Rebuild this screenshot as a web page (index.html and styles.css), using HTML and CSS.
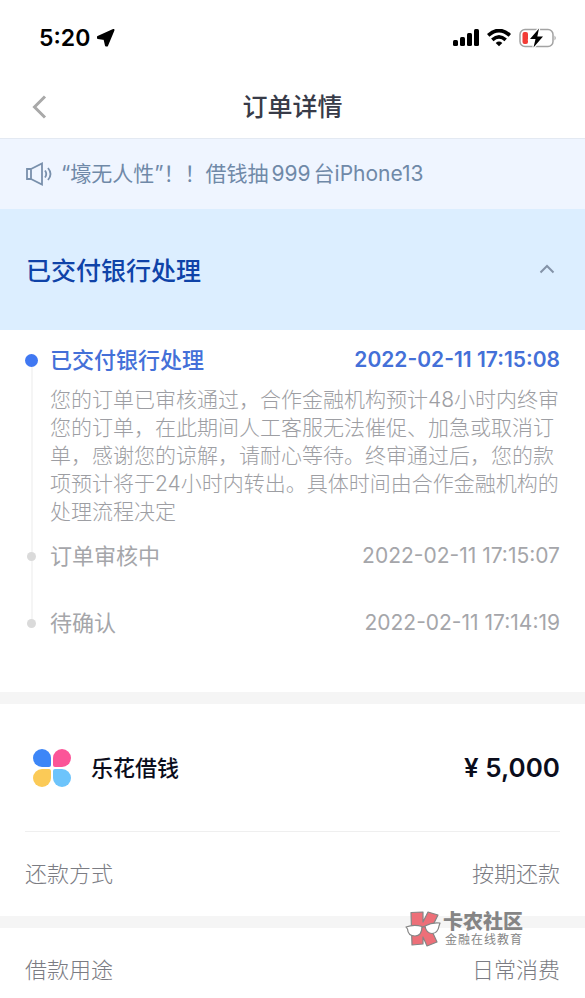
FILE: index.html
```html
<!DOCTYPE html>
<html lang="zh-CN">
<head>
    <meta charset="UTF-8">
    <meta name="viewport" content="width=device-width, initial-scale=1.0">
    <title>订单详情</title>
    <link rel="stylesheet" href="styles.css">
</head>
<body>
    <!-- Status bar -->
    <div class="status-bar">
        <div class="status-time">
            <span>5:20</span>
            <svg width="20" height="20" viewBox="0 0 20 20"><path d="M17.500 2 L2 9 L2 10 L8.500 11 L10 17.500 L11 17.500 Z" fill="#000" stroke="#000" stroke-width="2" stroke-linejoin="round"/></svg>
        </div>
        <div class="status-icons">
            <svg width="26" height="18" viewBox="0 0 26 18">
                <rect x="0" y="11" width="5" height="6" rx="1.500"/>
                <rect x="7" y="8" width="5" height="9" rx="1.500"/>
                <rect x="14" y="4" width="5" height="13" rx="1.500"/>
                <rect x="21" y="0" width="5" height="17" rx="1.500"/>
            </svg>
            <svg width="24" height="18" viewBox="0 0 24 18" fill="none" stroke="#000" stroke-width="3.600">
                <path d="M1.200 6.300 Q12 -3.300 22.800 6.300"/>
                <path d="M5.300 10.800 Q12 4.800 18.700 10.800"/>
                <path d="M12 17.300 L8.700 13.900 Q12 11.300 15.300 13.900 Z" fill="#000" stroke="none"/>
            </svg>
            <svg width="38" height="20" viewBox="0 0 38 20">
                <rect x="1" y="1.500" width="33" height="17" rx="5" fill="#fff" stroke="#a3a3a3" stroke-width="1.500"/>
                <path d="M35.500 7.500 Q38 10 35.500 12.500 Z" fill="#a3a3a3"/>
                <rect x="3.500" y="4" width="5.500" height="12" rx="2" fill="#f23c36"/>
                <path d="M20 0.500 L11 11 L16.500 11 L14.500 19.500 L24 8.500 L18.300 8.500 Z" fill="#000" stroke="#fff" stroke-width="2.500" paint-order="stroke"/>
            </svg>
        </div>
    </div>

    <header class="nav">
        <button class="back" type="button" aria-label="返回">
            <svg width="15" height="24" viewBox="0 0 15 24" fill="none" stroke="#a9a9a9" stroke-width="3"><path d="M13 1.500 L2.500 12 L13 22.500"/></svg>
        </button>
        <h1>订单详情</h1>
    </header>

    <a class="notice" href="#">
        <svg width="28" height="24" viewBox="0 0 28 24" fill="none" stroke="#7990ac" stroke-width="1.800">
            <path d="M2 7 H6 V17 H2 Z M6 7 L17 1.500 V22.500 L6 17"/>
            <path d="M20 8.500 Q22.500 12 20 15.500 M23 6 Q28 12 23 18"/>
        </svg>
        <span>“壕无人性”！！借钱抽<span class="num">999</span>台iPhone13</span>
    </a>

    <!-- Order progress -->
    <button class="banner" type="button" aria-expanded="true">
        <span>已交付银行处理</span>
        <svg width="16" height="10" viewBox="0 0 16 10" fill="none" stroke="#8493a8" stroke-width="2"><path d="M1.500 8.500 L8 2 L14.500 8.500"/></svg>
    </button>

    <ol class="timeline">
        <li class="step active">
            <div class="marker"></div>
            <div class="step-body">
                <div class="step-head">
                    <h2>已交付银行处理</h2>
                    <time>2022-02-11 17:15:08</time>
                </div>
                <p>您的订单已审核通过，合作金融机构预计48小时内终审您的订单，在此期间人工客服无法催促、加急或取消订单，感谢您的谅解，请耐心等待。终审通过后，您的款项预计将于24小时内转出。具体时间由合作金融机构的处理流程决定</p>
            </div>
        </li>
        <li class="step">
            <div class="marker"></div>
            <div class="step-body">
                <div class="step-head">
                    <h2>订单审核中</h2>
                    <time>2022-02-11 17:15:07</time>
                </div>
            </div>
        </li>
        <li class="step">
            <div class="marker"></div>
            <div class="step-body">
                <div class="step-head">
                    <h2>待确认</h2>
                    <time>2022-02-11 17:14:19</time>
                </div>
            </div>
        </li>
    </ol>

    <!-- Loan info -->
    <section class="card">
        <div class="product">
            <svg width="38" height="38" viewBox="0 0 38 38">
                <path d="M9 0 A9 9 0 0 0 9 18 H16 Q18 18 18 16 V9 A9 9 0 0 0 9 0 Z" fill="#3d86f7"/>
                <path d="M29 0 A9 9 0 0 1 29 18 H22 Q20 18 20 16 V9 A9 9 0 0 1 29 0 Z" fill="#fb5598"/>
                <path d="M9 38 A9 9 0 0 1 9 20 H16 Q18 20 18 22 V29 A9 9 0 0 1 9 38 Z" fill="#fbca57"/>
                <path d="M29 38 A9 9 0 0 0 29 20 H22 Q20 20 20 22 V29 A9 9 0 0 0 29 38 Z" fill="#6dc4fb"/>
            </svg>
            <span class="product-name">乐花借钱</span>
            <span class="amount">¥ 5,000</span>
        </div>
        <div class="row">
            <span>还款方式</span>
            <span>按期还款</span>
        </div>
    </section>

    <section class="card">
        <div class="row">
            <span>借款用途</span>
            <span>日常消费</span>
        </div>
    </section>

    <div class="watermark">
        <svg width="36" height="36" viewBox="0 0 36 36" stroke="#858585" stroke-width="1.200" stroke-linejoin="round">
            <path d="M6 1.500 L18 1 V11 L23 1 L33 4 L26 18 L32 31 L22 35 L18 26 V33 L7 34 Z" fill="#ed6f78"/>
            <path d="M1 16 Q9 13 17 15.500 Q17 25 10 25 Q3 25 2.500 18 Z" fill="#fff"/>
            <path d="M20 15 Q27 11 35 12 L34 15 Q33 22 27 22.500 Q21 22 20 15 Z" fill="#fff"/>
            <path d="M17 16.500 Q18.500 15 20 16" fill="none"/>
        </svg>
        <div>
            <strong>卡农社区</strong>
            <small>金融在线教育</small>
        </div>
    </div>
</body>
</html>
```
FILE: styles.css
```css
* {
    box-sizing: border-box;
}
body {
    position: relative;
    margin: 0;
    background-color: #fff;
    color: #7b7c83;
    font-family: Inter, "Noto Sans CJK SC", sans-serif;
    font-size: 22px;
    line-height: 28px;
}
h1, h2, p, ol {
    margin: 0;
    padding: 0;
}
button {
    border: none;
    background: none;
    font-family: inherit;
    cursor: pointer;
}
svg {
    display: block;
    flex-shrink: 0;
}
.status-bar {
    display: flex;
    justify-content: space-between;
    align-items: center;
    height: 75px;
    padding: 0 28px 0 39px;
    color: #000;
}
.status-time {
    display: flex;
    align-items: center;
    gap: 6px;
    font-size: 23px;
    font-weight: 600;
}
.status-icons {
    display: flex;
    align-items: center;
    gap: 8px;
}
.nav {
    display: grid;
    grid-template-columns: 60px 1fr 60px;
    align-items: center;
    height: 64px;
    border-bottom: 1px solid #e3e9f2;
}
.back {
    padding: 0 0 0 32px;
}
.nav h1 {
    color: #383b48;
    font-size: 25px;
    font-weight: 500;
    text-align: center;
}
.notice {
    display: flex;
    align-items: center;
    gap: 8px;
    height: 70px;
    padding: 0 25px;
    background-color: #eff5ff;
    color: #6f89a8;
    font-size: 21px;
    text-decoration: none;
}
.num {
    margin: 0 3px;
}
.banner {
    display: flex;
    justify-content: space-between;
    align-items: center;
    width: 100%;
    height: 121px;
    padding: 0 30px 2px 26px;
    background-color: #dceeff;
    color: #0f43a8;
    font-size: 25px;
    font-weight: 500;
}
.timeline {
    padding: 16px 25px;
    list-style: none;
}
.step {
    display: flex;
    gap: 12px;
}
.marker {
    display: flex;
    flex-direction: column;
    align-items: center;
    width: 13px;
}
.marker::before {
    content: "";
    width: 9px;
    height: 9px;
    margin-top: 10px;
    border-radius: 50%;
    background-color: #dadada;
}
.marker::after {
    content: "";
    flex: 1;
    width: 2px;
    margin-bottom: -10px;
    background-color: #f5f5f5;
}
.step:last-child .marker::after {
    display: none;
}
.step-body {
    flex: 1;
    padding-bottom: 39px;
}
.step-head {
    display: flex;
    justify-content: space-between;
    color: #a5a6aa;
}
.step-head h2 {
    font-size: 22px;
    font-weight: 400;
}
.step-head time {
    font-size: 21px;
}
.step p {
    margin-top: 12px;
    color: #9d9ea3;
    font-size: 21px;
    font-weight: 300;
}
.active .marker::before {
    width: 13px;
    height: 13px;
    margin-top: 8px;
    background-color: #4078f2;
}
.active .step-body {
    padding-bottom: 16px;
}
.active .step-head {
    color: #4470d8;
}
.active h2 {
    font-weight: 500;
}
.active time {
    font-weight: 600;
}
.card {
    padding: 0 25px;
    border-top: 12px solid #f5f5f5;
}
.product {
    display: flex;
    align-items: center;
    height: 128px;
    padding-left: 8px;
    border-bottom: 1px solid #efefef;
    color: #0b0d1c;
}
.product-name {
    margin-left: 20px;
    font-weight: 500;
}
.amount {
    margin-left: auto;
    font-size: 26px;
    font-weight: 600;
}
.row {
    display: flex;
    justify-content: space-between;
    padding: 28px 0;
    font-weight: 300;
}
.card:last-of-type .row {
    padding-bottom: 15px;
}
.watermark {
    position: absolute;
    right: 62px;
    bottom: 52px;
    display: flex;
    align-items: center;
    gap: 2px;
    color: #858585;
}
.watermark strong {
    display: block;
    font-size: 20px;
    font-weight: 900;
    line-height: 22px;
}
.watermark small {
    display: block;
    padding-left: 2px;
    font-size: 12px;
    letter-spacing: 1px;
    line-height: 14px;
}
```
